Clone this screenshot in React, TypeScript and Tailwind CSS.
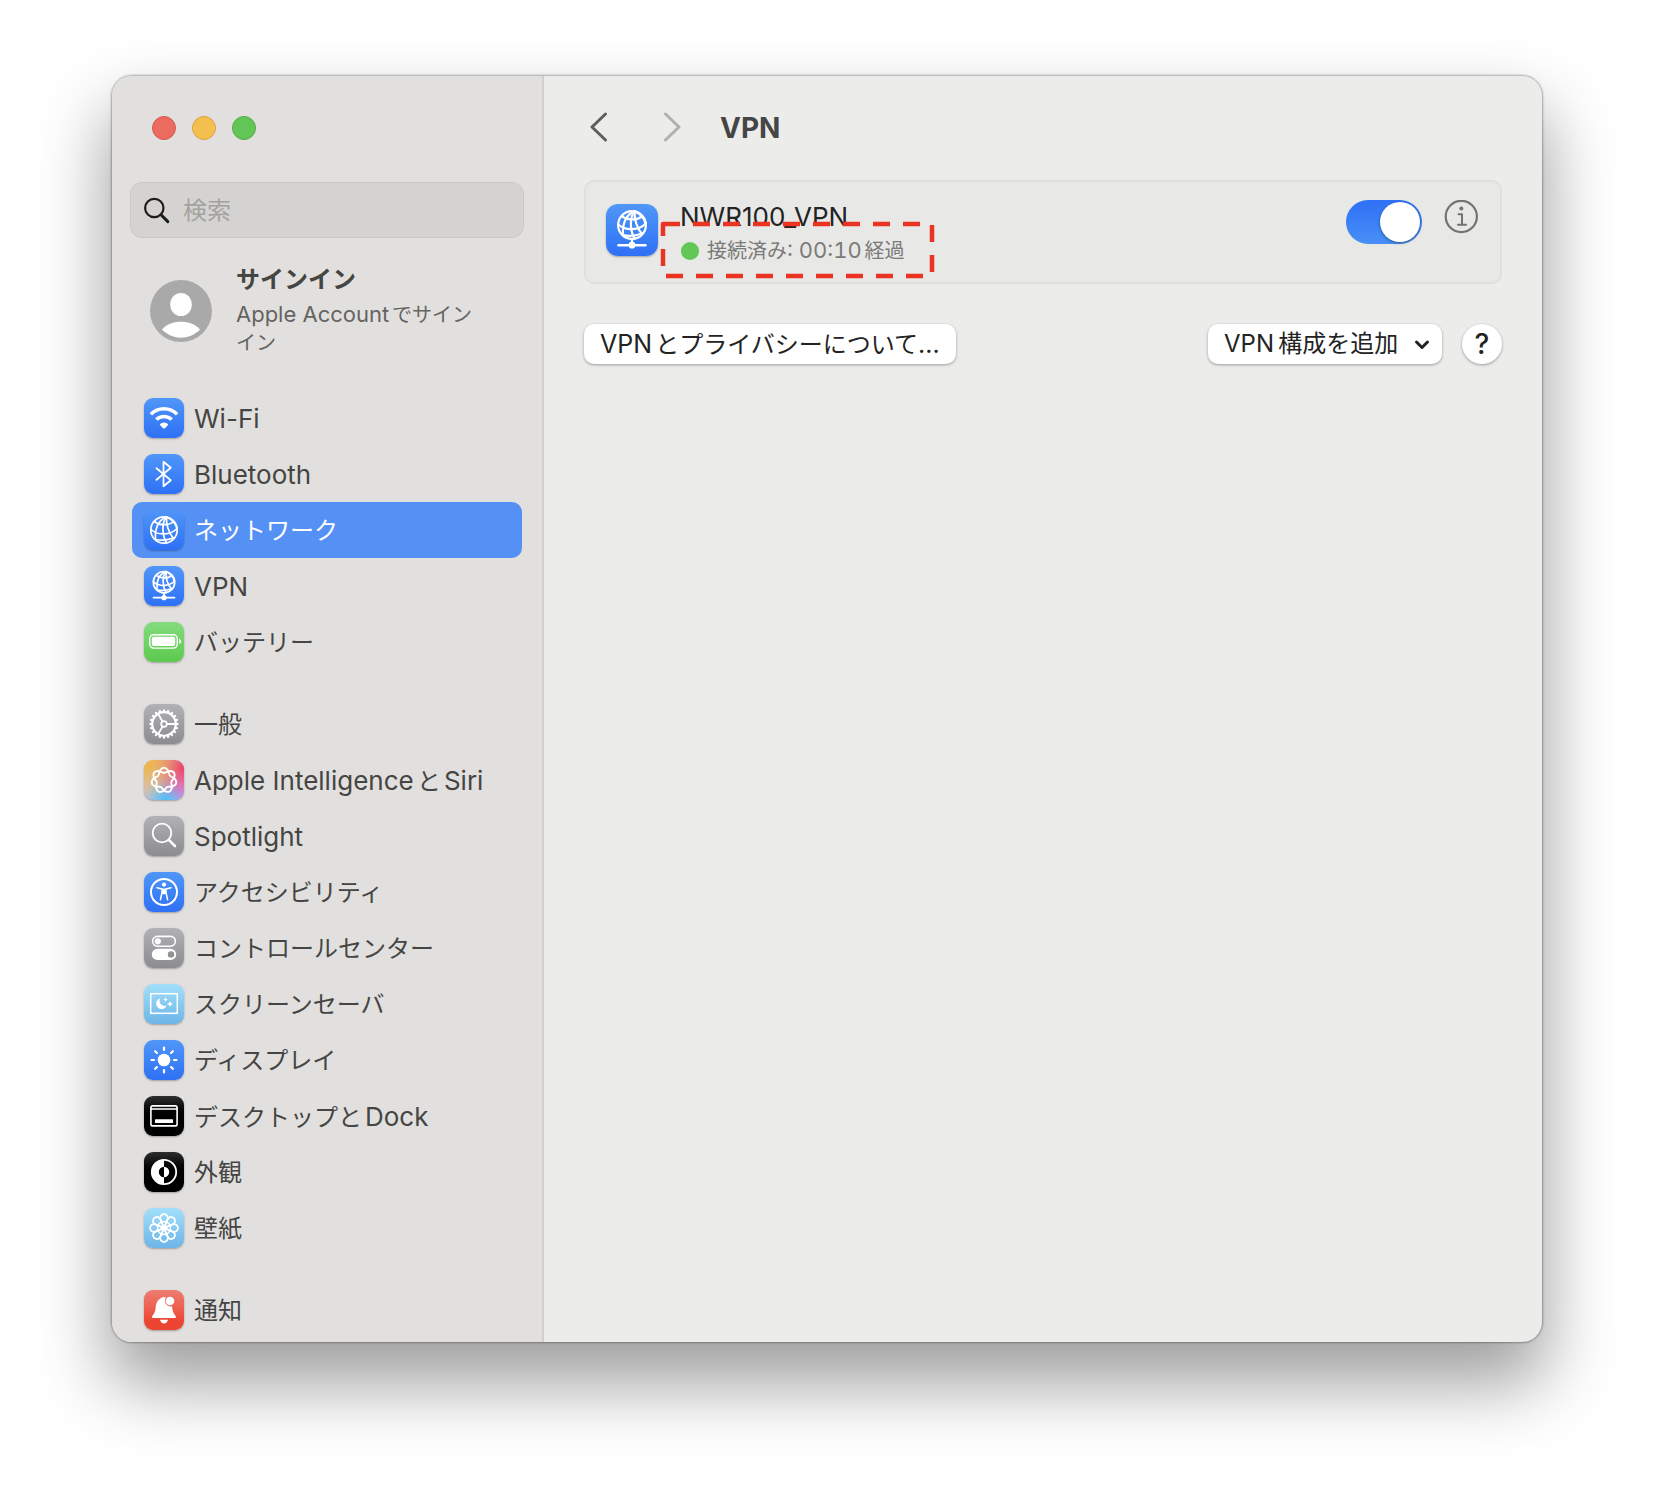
import { Fragment, ReactNode, useState } from "react";

const BLUE = "bg-linear-to-b from-[#5096f8] to-[#2f70f5]";
const GRAY = "bg-linear-to-b from-[#b2b1b6] to-[#8c8b90]";
const SKY = "bg-linear-to-b from-[#a2dffa] to-[#6db5e8]";
const BLACK = "bg-linear-to-b from-[#2e2e2e] to-black to-60%";

// Latin runs are set one step larger than the Japanese around them
const Mixed = ({ text, latin = "text-[26px]" }: { text: string; latin?: string }) => (
  <span>
    {text.split(/([\x20-\x7e]+)/).map((part, i) =>
      i % 2 ? <span key={i} className={latin}>{part}</span> : <Fragment key={i}>{part}</Fragment>
    )}
  </span>
);

const Svg = ({ children, className = "size-10" }: { children: ReactNode; className?: string }) => (
  <svg viewBox="0 0 40 40" className={className} fill="none" stroke="#fff" strokeLinecap="round" strokeLinejoin="round" aria-hidden="true">
    {children}
  </svg>
);

const globeLines = (
  <>
    <circle cx="20" cy="20" r="13.2" />
    <path d="M22.500 7C15.500 9.500 10.500 17 11.500 29.500" />
    <path d="M22.500 7C18 12 17.500 24 22.500 33" />
    <path d="M22.500 7C22 14 24.500 23 29.500 28.500" />
    <path d="M22.500 7C27 9 31.500 13 32.800 18" />
    <path d="M10.500 11.500C15 15.500 25 16 29.500 11.500" />
    <path d="M7 19.500C14 26 27 25 33 18.500" />
    <path d="M11.500 29.500C16 30.500 24 30 29.500 28" />
  </>
);

const VpnIcon = ({ className }: { className?: string }) => (
  <Svg className={className}>
    <g strokeWidth="2.1" transform="translate(3.8 0) scale(0.81)">
      {globeLines}
    </g>
    <path d="M20 27V31M9.500 31.700H30.500" strokeWidth="1.8" />
    <circle cx="20" cy="31.700" r="2.600" fill="#fff" stroke="none" />
  </Svg>
);

const GearIcon = () => (
  <Svg>
    <circle cx="20" cy="20" r="11.800" strokeWidth="2.200" />
    {Array.from({ length: 20 }, (_, i) => (
      <path key={i} d="M20 7.800V5.400" strokeWidth="2.200" strokeLinecap="butt" transform={`rotate(${i * 18} 20 20)`} />
    ))}
    <circle cx="20" cy="20" r="2.800" strokeWidth="1.800" />
    <path d="M22.800 20H31.500M18.600 17.600L14.200 10M18.600 22.400L14.200 30" strokeWidth="1.800" />
  </Svg>
);

// Closed seven-tipped loop that winds twice around the centre
const loop = Array.from({ length: 168 }, (_, i) => {
  const a = (i / 168) * Math.PI * 4;
  const r = 10 + 2.5 * Math.cos(3.5 * a);
  return `${(20 + r * Math.sin(a)).toFixed(2)},${(20.3 - r * Math.cos(a)).toFixed(2)}`;
}).join(" ");

const FlowerIcon = () => (
  <Svg>
    {Array.from({ length: 8 }, (_, i) => (
      <path key={i} d="M20 19C18.500 15.500 16.200 13 16.200 9.900A3.800 3.800 0 0 1 23.800 9.900C23.800 13 21.500 15.500 20 19" strokeWidth="1.600" transform={`rotate(${i * 45} 20 20)`} />
    ))}
    {Array.from({ length: 8 }, (_, i) => (
      <circle key={i} cx="20" cy="10" r="3.800" strokeWidth="1.400" transform={`rotate(${i * 45} 20 20)`} />
    ))}
  </Svg>
);

type Item = { label: string; tile: string; icon: ReactNode };

const groups: Item[][] = [
  [
    {
      label: "Wi-Fi",
      tile: BLUE,
      icon: (
        <Svg>
          <path d="M6.800 16.300A18.500 18.500 0 0 1 33.200 16.300M12.300 21.500A11.200 11.200 0 0 1 27.700 21.500" strokeWidth="3.500" strokeLinecap="butt" />
          <path d="M15.600 26.400A6.200 6.200 0 0 1 24.400 26.400L20.900 30.200Q20 31 19.100 30.200Z" fill="#fff" stroke="none" />
        </Svg>
      ),
    },
    {
      label: "Bluetooth",
      tile: BLUE,
      icon: (
        <Svg>
          <path d="M12.500 14.200L26.800 26.200L19.500 32.200V7.800L26.800 13.800L12.500 25.800" strokeWidth="1.800" />
        </Svg>
      ),
    },
    { label: "ネットワーク", tile: BLUE, icon: <Svg><g strokeWidth="1.700">{globeLines}</g></Svg> },
    { label: "VPN", tile: BLUE, icon: <VpnIcon className="size-10" /> },
    {
      label: "バッテリー",
      tile: "bg-linear-to-b from-[#83dc7c] to-[#5cc94d]",
      icon: (
        <Svg>
          <rect x="5.700" y="12.700" width="27.600" height="13.400" rx="4" strokeWidth="1.400" />
          <rect x="7.800" y="14.800" width="23.400" height="9.200" rx="2" fill="#fff" stroke="none" />
          <path d="M35.200 16.800Q37.200 17.600 37.200 19.400T35.200 22Z" fill="#fff" stroke="none" />
        </Svg>
      ),
    },
  ],
  [
    { label: "一般", tile: GRAY, icon: <GearIcon /> },
    {
      label: "Apple IntelligenceとSiri",
      tile: "bg-[radial-gradient(circle_at_0%_0%,#f6b32e,transparent_70%),radial-gradient(circle_at_95%_20%,#ee3f6a,transparent_65%),radial-gradient(circle_at_55%_100%,#4fbdf5,transparent_50%),radial-gradient(circle_at_100%_85%,#dd90ff,transparent_50%)] bg-[#c9c3d8]",
      icon: (
        <Svg>
          <polygon points={loop} strokeWidth="1.900" />
        </Svg>
      ),
    },
    {
      label: "Spotlight",
      tile: GRAY,
      icon: (
        <Svg>
          <circle cx="18" cy="17" r="9.300" strokeWidth="1.800" />
          <path d="M24.800 23.800L31 30" strokeWidth="2.600" />
        </Svg>
      ),
    },
    {
      label: "アクセシビリティ",
      tile: BLUE,
      icon: (
        <Svg>
          <circle cx="20" cy="20" r="13" strokeWidth="2" />
          <circle cx="20" cy="12.600" r="2.100" fill="#fff" stroke="none" />
          <path d="M13 15.700L18 16.900V20.500L16.400 27.800M27 15.700L22 16.900V20.500L23.600 27.800" strokeWidth="1.500" />
          <path d="M18 16.600H22V21.500L20 22.500L18 21.500Z" fill="#fff" stroke="none" />
        </Svg>
      ),
    },
    {
      label: "コントロールセンター",
      tile: GRAY,
      icon: (
        <Svg>
          <rect x="8.600" y="8.400" width="22.800" height="9.800" rx="4.900" strokeWidth="1.600" />
          <circle cx="13.800" cy="13.300" r="3.100" fill="#fff" stroke="none" />
          <rect x="7.800" y="20.800" width="24.400" height="11.200" rx="5.600" fill="#fff" stroke="none" />
          <circle cx="27" cy="26.400" r="3.200" fill="#929196" stroke="none" />
        </Svg>
      ),
    },
    {
      label: "スクリーンセーバ",
      tile: SKY,
      icon: (
        <Svg>
          <rect x="6.700" y="9.700" width="26.600" height="19.600" strokeWidth="1.500" strokeLinejoin="miter" />
          <path d="M16.200 14.400A5.400 5.400 0 1 0 22.600 21.600A5.200 5.200 0 0 1 16.200 14.400Z" fill="#fff" stroke="none" />
          <path d="M21.500 13L22.200 14.900L24 15.600L22.200 16.300L21.500 18L20.800 16.300L19 15.600L20.800 14.900ZM26 17L26.900 19.100L29 20L26.900 20.900L26 23L25.100 20.900L23 20L25.100 19.100Z" fill="#fff" stroke="none" />
        </Svg>
      ),
    },
    {
      label: "ディスプレイ",
      tile: BLUE,
      icon: (
        <Svg>
          <circle cx="20" cy="20" r="6.300" fill="#fff" stroke="none" />
          {Array.from({ length: 8 }, (_, i) => (
            <path key={i} d="M20 7.500V10" strokeWidth="2.200" transform={`rotate(${i * 45} 20 20)`} />
          ))}
        </Svg>
      ),
    },
    {
      label: "デスクトップとDock",
      tile: BLACK,
      icon: (
        <Svg>
          <rect x="6.900" y="9.900" width="26.200" height="20" rx="2" strokeWidth="1.600" />
          <path d="M7 13H33" strokeWidth="1.300" />
          <rect x="11" y="23.300" width="18" height="3.800" rx="0.600" fill="#fff" stroke="none" />
        </Svg>
      ),
    },
    {
      label: "外観",
      tile: BLACK,
      icon: (
        <Svg>
          <circle cx="20" cy="20" r="12.200" strokeWidth="1.800" />
          <path d="M20 7.500V14.800A5.200 5.200 0 0 0 20 25.200V32.500A12.500 12.500 0 0 1 20 7.500ZM20 14.800A5.200 5.200 0 0 1 20 25.200Z" fill="#fff" stroke="none" />
        </Svg>
      ),
    },
    { label: "壁紙", tile: SKY, icon: <FlowerIcon /> },
  ],
  [
    {
      label: "通知",
      tile: "bg-linear-to-b from-[#ee7c70] to-[#eb4431] to-80%",
      icon: (
        <Svg>
          <path d="M8 27.200C8 25 11 24.500 11.600 18C12 12 14.500 9 18 7.500Q20 6.600 22 7.500A5.600 5.600 0 0 0 27.600 16.300C28.200 16.300 28 16.300 28.200 17.500C28.800 24.500 32 25 32 27.200Q32 28 31 28H9Q8 28 8 27.200Z" fill="#fff" stroke="none" />
          <circle cx="26" cy="11" r="4.300" fill="#fff" stroke="none" />
          <path d="M16 29.700H24Q23 33.400 20 33.400T16 29.700Z" fill="#fff" stroke="none" />
        </Svg>
      ),
    },
  ],
];

const Sidebar = ({ selected, onSelect }: { selected: string; onSelect: (label: string) => void }) => (
  <aside className="w-[432px] shrink-0 border-r-2 border-[#d0cfcd] bg-[#e1e0de] px-5 pt-10 text-[#454543]">
    {/* Window controls */}
    <div className="flex gap-4 pl-5">
      <button aria-label="閉じる" className="size-6 rounded-full border border-[#d6594d] bg-[#ec6b5f]" />
      <button aria-label="しまう" className="size-6 rounded-full border border-[#d8a340] bg-[#f5bf50]" />
      <button aria-label="拡大" className="size-6 rounded-full border border-[#50ab44] bg-[#62c555]" />
    </div>

    <label className="-mx-0.5 mt-[42px] flex h-14 items-center gap-3 rounded-xl border border-[#c9c8c6] bg-[#d4d3d1] px-3">
      <svg viewBox="0 0 28 28" className="size-7 shrink-0" fill="none" stroke="#1c1c1c" strokeLinecap="round" aria-hidden="true">
        <circle cx="11.300" cy="12" r="9.200" strokeWidth="2.200" />
        <path d="M18 18.800L24.800 25.600" strokeWidth="3" />
      </svg>
      <input type="search" placeholder="検索" aria-label="検索" className="w-full min-w-0 bg-transparent pt-0.5 text-2xl outline-none placeholder:text-[#a3a2a0]" />
    </label>

    {/* Account */}
    <button className="mt-[26px] flex w-full items-center gap-6 pl-[18px] text-left">
      <svg viewBox="0 0 62 62" className="size-[62px] shrink-0" aria-hidden="true">
        <circle cx="31" cy="31" r="31" fill="#a9a9a9" />
        <ellipse cx="31" cy="24.500" rx="10.800" ry="11.600" fill="#fff" />
        <path d="M12 49.500C20 39 42 39 50 49.500C39 60.500 23 60.500 12 49.500Z" fill="#fff" />
      </svg>
      <span className="w-60">
        <span className="mb-1 block text-2xl leading-8 font-bold">サインイン</span>
        <span className="block text-xl leading-7 text-[#646462]">
          <Mixed text="Apple Accountでサインイン" latin="text-[22px] leading-7" />
        </span>
      </span>
    </button>

    <nav className="mt-[33px] flex flex-col gap-[26px]">
      {groups.map((items) => (
        <ul key={items[0].label}>
          {items.map(({ label, tile, icon }) => (
            <li key={label}>
              <button
                onClick={() => onSelect(label)}
                className={`flex h-14 w-full items-center gap-2.5 rounded-[10px] px-3 text-2xl ${label === selected ? "bg-[#5590f5] text-white" : ""}`}
              >
                <span className={`shrink-0 rounded-[9px] shadow-[0_1px_2px_rgba(0,0,0,0.3)] ${tile}`}>{icon}</span>
                <span className="pt-0.5"><Mixed text={label} /></span>
              </button>
            </li>
          ))}
        </ul>
      ))}
    </nav>
  </aside>
);

const App = () => {
  const [selected, setSelected] = useState("ネットワーク");
  const [connected, setConnected] = useState(true);

  return (
    <div className="flex min-h-screen bg-white px-28 pt-[76px] pb-[148px] font-['Inter','Noto_Sans_CJK_JP',sans-serif] [text-autospace:normal]">
      <div className="flex flex-1 overflow-hidden rounded-[20px] bg-[#ececea] shadow-[0_0_2px_1px_rgba(0,0,0,0.3),0_38px_70px_4px_rgba(0,0,0,0.38)]">
        <Sidebar selected={selected} onSelect={setSelected} />

        <main className="min-w-0 flex-1 px-10 pt-[31px] text-[#232323]">
          <header className="flex h-10 items-center">
            <button aria-label="戻る" className="px-1.5">
              <svg viewBox="0 0 20 30" className="h-[30px] w-5" fill="none" stroke="#5e5e5d" strokeWidth="3" strokeLinecap="round" strokeLinejoin="round">
                <path d="M15.500 2L2 15L15.500 28" />
              </svg>
            </button>
            <button aria-label="進む" disabled className="ml-10 px-1.5">
              <svg viewBox="0 0 20 30" className="h-[30px] w-5" fill="none" stroke="#b0b0af" strokeWidth="3" strokeLinecap="round" strokeLinejoin="round">
                <path d="M3.500 2L17 15L3.500 28" />
              </svg>
            </button>
            <h1 className="ml-8 pt-0.5 text-[28px] font-bold text-[#454545]">VPN</h1>
          </header>

          {/* Connection card */}
          <section className="relative mt-[33px] flex h-26 items-start rounded-[10px] border-2 border-[#dfdfdd] bg-[#e8e8e6] px-5">
            <span className={`mt-[22px] shrink-0 rounded-xl shadow-[0_1px_2px_rgba(0,0,0,0.3)] ${BLUE}`}>
              <VpnIcon className="size-[52px]" />
            </span>
            <div className="mt-[19px] ml-[22px]">
              <h2 className="mb-px text-[26px] leading-8">NWR100_VPN</h2>
              <p className="flex items-center gap-2 pl-px text-xl leading-8 text-[#7a7a79] tabular-nums">
                <span className="size-[18px] rounded-full bg-[#62c755]" />
                <Mixed text="接続済み: 00:10経過" latin="text-[22px] leading-8" />
              </p>
            </div>
            <input
              type="checkbox"
              role="switch"
              aria-label="NWR100_VPN"
              checked={connected}
              onChange={(e) => setConnected(e.target.checked)}
              className="mt-[18px] ml-auto h-11 w-[76px] shrink-0 appearance-none rounded-full bg-[#c9c9c8] p-0.5 before:block before:size-10 before:rounded-full before:bg-white before:shadow-[0_1px_3px_rgba(0,0,0,0.4)] checked:bg-linear-to-b checked:from-[#2f70f5] checked:to-[#488ff7] checked:before:translate-x-8"
            />
            <button aria-label="詳細" className="mt-[18px] mr-0.5 ml-[22px]">
              <svg viewBox="0 0 34 34" className="size-[34px]" fill="none" stroke="#737372" strokeLinecap="round" strokeLinejoin="round">
                <circle cx="17.300" cy="16.500" r="15.600" strokeWidth="2.200" />
                <circle cx="17.300" cy="8.600" r="2" fill="#737372" stroke="none" />
                <path d="M14.500 14.300H18V24.500M14 24.700H22" strokeWidth="2" />
              </svg>
            </button>

            {/* Highlight around the connection status */}
            <svg className="pointer-events-none absolute top-[38px] left-[73px] h-[60px] w-[278px]" fill="none" aria-hidden="true">
              <path d="M4 4H273V56H4Z" stroke="#ea3323" strokeWidth="4.500" strokeDasharray="17 13" strokeLinejoin="round" />
            </svg>
          </section>

          <div className="mt-10 flex items-center">
            <button className="h-10 rounded-[10px] bg-white px-4 text-2xl leading-10 shadow-[0_1px_3px_rgba(0,0,0,0.35)]">
              <Mixed text="VPNとプライバシーについて..." latin="text-[25px] leading-10" />
            </button>
            <div className="relative ml-auto">
              <select aria-label="VPN構成を追加" className="h-10 w-[234px] appearance-none rounded-[10px] bg-white pl-4 text-2xl leading-10 shadow-[0_1px_3px_rgba(0,0,0,0.35)]">
                <option>{"VPN\u2009構成を追加"}</option>
              </select>
              <svg viewBox="0 0 16 12" className="pointer-events-none absolute top-[15px] right-3 h-3 w-4" fill="none" stroke="#232323" strokeWidth="3" strokeLinecap="round" strokeLinejoin="round">
                <path d="M2.500 3L8 8.500L13.500 3" />
              </svg>
            </div>
            <button aria-label="ヘルプ" className="ml-5 size-10 rounded-full bg-white text-[28px] leading-10 font-medium shadow-[0_1px_3px_rgba(0,0,0,0.35)]">
              ?
            </button>
          </div>
        </main>
      </div>
    </div>
  );
};

export default App;
